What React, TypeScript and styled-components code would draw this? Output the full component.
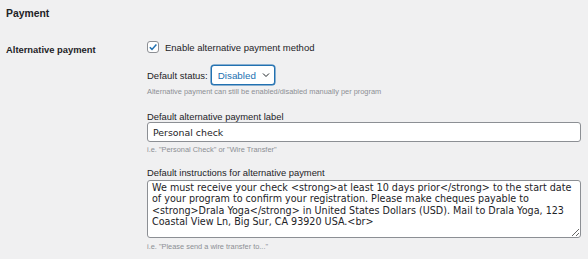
import React from "react";
import styled, { createGlobalStyle } from "styled-components";

const textColor = "#1d2327";
const helpColor = "#8c8f94";
const blue = "#2271b1";
const fieldBorder = "#8c8f94";

const GlobalStyle = createGlobalStyle`
  body {
    margin: 0;
    background: #f0f0f1;
    color: ${textColor};
    font-family: "Liberation Sans", Arial, sans-serif;
  }
`;

const Page = styled.div`
  padding: 7px 8px 0 6px;
`;

const Heading = styled.h2`
  margin: 0;
  font-size: 10.4px;
  line-height: 14px;
  font-weight: 700;
`;

const FormRow = styled.div`
  display: grid;
  grid-template-columns: 141px 1fr;
  padding-top: 18px;
`;

const RowTitle = styled.div`
  font-size: 9.4px;
  font-weight: 700;
  line-height: 14px;
  padding-top: 4px;
`;

const Fields = styled.div`
  display: flex;
  flex-direction: column;
`;

const CheckLine = styled.label`
  display: flex;
  align-items: center;
  gap: 6px;
  height: 16px;
  font-size: 9.5px;
`;

const Box = styled.span`
  width: 10px;
  height: 10px;
  border: 1px solid ${fieldBorder};
  border-radius: 3px;
  background: #fff;
  display: flex;
  align-items: center;
  justify-content: center;
`;

const StatusLine = styled.div`
  display: flex;
  align-items: center;
  gap: 3px;
  margin-top: 10px;
  font-size: 9.5px;
`;

const SelectWrap = styled.div`
  position: relative;
  display: flex;
`;

const Select = styled.select`
  appearance: none;
  width: 64px;
  height: 20px;
  margin: 0;
  padding: 0 16px 0 6px;
  border: 1px solid ${blue};
  border-radius: 3px;
  background: #fff;
  color: ${blue};
  font-family: "Liberation Sans", Arial, sans-serif;
  font-size: 9.8px;
  box-shadow: 0 0 0 0.5px ${blue};
  outline: none;
`;

const Chevron = styled.svg`
  position: absolute;
  right: 5px;
  top: 7px;
  pointer-events: none;
`;

const Help = styled.div<{ $gap: number }>`
  margin-top: ${(p) => p.$gap}px;
  font-size: 7.4px;
  line-height: 10px;
  color: ${helpColor};
`;

const FieldLabel = styled.div<{ $gap: number }>`
  margin-top: ${(p) => p.$gap}px;
  font-size: 9.4px;
  line-height: 10px;
`;

const TextInput = styled.input`
  box-sizing: border-box;
  width: 434px;
  height: 20px;
  margin: 0;
  padding: 0 5px;
  border: 1px solid ${fieldBorder};
  border-radius: 3px;
  background: #fff;
  color: ${textColor};
  font-family: "DejaVu Sans", Verdana, sans-serif;
  font-size: 9.4px;
  outline: none;
`;

const TextArea = styled.textarea`
  box-sizing: border-box;
  width: 434px;
  height: 58px;
  margin: 2px 0 0;
  padding: 1px 4px 0;
  border: 1px solid ${fieldBorder};
  border-radius: 3px;
  background: #fff;
  color: ${textColor};
  font-family: "DejaVu Sans", Verdana, sans-serif;
  font-size: 9.6px;
  line-height: 11.3px;
  outline: none;
  display: block;
`;

const instructions =
  "We must receive your check <strong>at least 10 days prior</strong> to the start date of your program to confirm your registration. Please make cheques payable to <strong>Drala Yoga</strong> in United States Dollars (USD). Mail to Drala Yoga, 123 Coastal View Ln, Big Sur, CA 93920 USA.<br>";

export default function App() {
  return (
    <Page>
      <GlobalStyle />
      <Heading>Payment</Heading>
      <FormRow>
        <RowTitle>Alternative payment</RowTitle>
        <Fields>
          <CheckLine>
            <Box>
              <svg width="10" height="10" viewBox="0 0 10 10">
                <path d="M1.8 5.2 L4 7.4 L8.4 2.4" fill="none" stroke={blue} strokeWidth="1.5" />
              </svg>
            </Box>
            Enable alternative payment method
          </CheckLine>
          <StatusLine>
            Default status:
            <SelectWrap>
              <Select defaultValue="disabled">
                <option value="disabled">Disabled</option>
                <option value="enabled">Enabled</option>
              </Select>
              <Chevron width="8" height="6" viewBox="0 0 8 6">
                <path d="M1 1.5 L4 4.5 L7 1.5" fill="none" stroke={textColor} strokeWidth="1" />
              </Chevron>
            </SelectWrap>
          </StatusLine>
          <Help $gap={2}>Alternative payment can still be enabled/disabled manually per program</Help>
          <FieldLabel $gap={15}>Default alternative payment label</FieldLabel>
          <TextInput defaultValue="Personal check" />
          <Help $gap={3}>i.e. "Personal Check" or "Wire Transfer"</Help>
          <FieldLabel $gap={13}>Default instructions for alternative payment</FieldLabel>
          <TextArea defaultValue={instructions} />
          <Help $gap={4}>i.e. "Please send a wire transfer to..."</Help>
        </Fields>
      </FormRow>
    </Page>
  );
}
